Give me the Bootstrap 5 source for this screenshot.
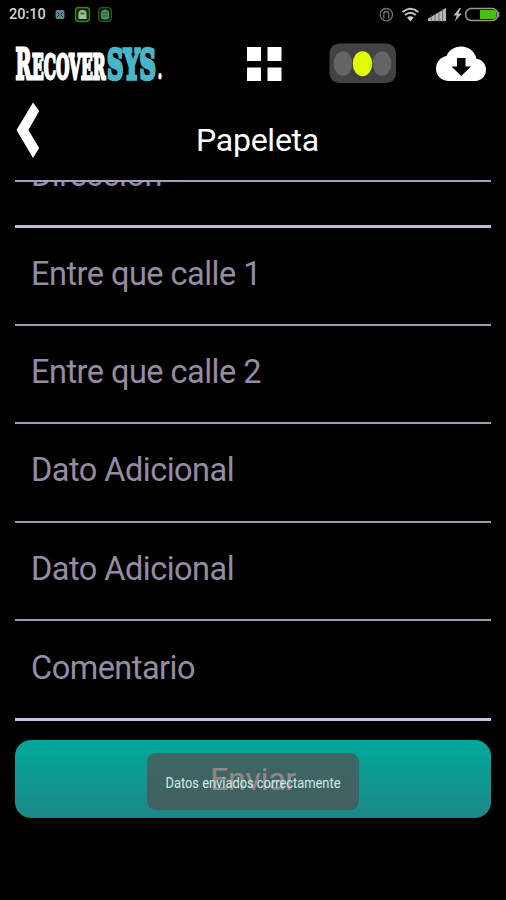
<!DOCTYPE html>
<html lang="es">
<head>
<meta charset="utf-8">
<meta name="viewport" content="width=device-width, initial-scale=1">
<title>RecoverSYS - Papeleta</title>
<link href="https://cdn.jsdelivr.net/npm/bootstrap@5.3.0/dist/css/bootstrap.min.css" rel="stylesheet">
<style>
body{background:#000;color:#fff;font-family:Roboto,sans-serif;height:900px;overflow:hidden}
svg{display:block;flex:none}
.status-bar{height:30px;padding:0 5px 0 9px}
.clock{font-size:14.5px;font-weight:500;line-height:30px;color:#d4d4d4;width:46px}
.app-bar{height:68px;padding:0 19px 0 14px}
.title-bar{height:82px;padding-left:16px}
.back-icon{margin-top:3px}
.page-title{font-size:32px;line-height:40px;font-weight:400;letter-spacing:-.25px;padding-top:22px;padding-left:156px;white-space:nowrap}
.form-area{margin:0 15px;height:541px;overflow:hidden;border-top:2px solid #ab9cbf}
.field-row{height:98.5px;padding:22px 0 0 16px;border-bottom:2px solid #a398b3}
.field-row.cut{height:46px;padding-top:0;border-bottom:3px solid #c7b4da}
.field-row.cut .field-label{margin-top:-31px}
.field-row.cut + .field-row{height:97.5px}
.field-row.strong{height:100px;border-bottom:3px solid #d0bce4;padding-top:23px}
.field-label{font-size:32.500px;line-height:48px;letter-spacing:-.52px;color:#958ba3;white-space:nowrap}
.send{margin:19px 15px 0;height:78px;border-radius:16px;background:linear-gradient(#02a99c,#1d8787);border:0}
.send-label{font-size:32px;line-height:78px;letter-spacing:-.3px;color:#fff}
.notice{left:132px;top:13px;width:212px;height:57px;border-radius:9px;background:rgba(90,73,74,.66)}
</style>
</head>
<body class="d-flex flex-column">
<div class="status-bar d-flex align-items-center justify-content-between">
  <div class="d-flex align-items-center">
    <span class="clock">20:10</span>
    <svg width="60" height="20" viewBox="55 5 60 20">
      <rect x="55.500" y="10" width="9" height="9" rx="2" fill="#668489"/><path d="M57 12l2.500 2.500L57 17M63 12l-2.500 2.500L63 17" stroke="#283c40" fill="none"/>
      <rect x="75.500" y="7.500" width="14" height="14" rx="3" fill="#10290b" stroke="#388019" stroke-width="1.300"/><path d="M78.500 19v-5q0-4 4-4t4 4v5z" fill="#9fbd97"/><path d="M80.500 12.500h4v2h-4z" fill="#42623b"/>
      <rect x="98.500" y="7.500" width="13" height="14" rx="3" fill="#102a14" stroke="#245e23"/><path d="M101 12q4-5 8 0v6q-4 3-8 0z" fill="#568c5b"/><path d="M102.500 13h5m-5 3h5" stroke="#204628"/>
    </svg>
  </div>
  <svg width="124" height="22" viewBox="378 4 124 22">
    <g fill="none" stroke="#737373" stroke-width="1.300"><circle cx="387.300" cy="14.700" r="6.200"/><path d="M384.800 18.500v-4.500a2.500 2.500 0 0 1 5 0v4.500"/></g>
    <g fill="none" stroke="#c6c6c6" stroke-width="2"><path d="M403.500 12q7.900-6.500 15.800 0M406 15q5.400-4.500 10.800 0"/></g><path d="M408 17.500q3.400-2.500 6.800 0l-3.400 4z" fill="#ccc"/>
    <path d="M429 21v-2.500L447 8v13z" fill="#b5b5b5"/><path d="M432.500 15v7M436 13v9M440 11v11M443.500 9v13" stroke="#555" stroke-width=".7"/>
    <path d="M460.500 8l-6 7.500h3.300l-2 6 7-8h-3.600l2.800-5.500z" fill="#bbb"/>
    <rect x="466.700" y="8.500" width="32" height="12" rx="5.500" fill="#000" stroke="#999" stroke-width="1.500"/><path d="M481 10h13q3.500 0 3.500 3v3q0 3-3.500 3h-13z" fill="#48c10b"/><path d="M499.700 12v5" stroke="#8a8a8a" stroke-width="1.500"/>
  </svg>
</div>

<header class="app-bar d-flex align-items-center">
  <svg width="232" height="68" viewBox="14 30 232 68" font-family="'DejaVu Serif',serif" font-weight="700" stroke-linejoin="miter">
    <text y="79" fill="#fff" stroke="#fff" stroke-width="2.800"><tspan x="15.500" font-size="42" textLength="16" lengthAdjust="spacingAndGlyphs">R</tspan><tspan x="32" font-size="34" textLength="73.500" lengthAdjust="spacingAndGlyphs">ECOVER</tspan><tspan x="107" font-size="41" textLength="49" lengthAdjust="spacingAndGlyphs" fill="#48b6c6" stroke="#48b6c6" stroke-width="3.600">SYS</tspan><tspan x="157.500" font-size="29" textLength="5" lengthAdjust="spacingAndGlyphs" stroke-width="1">.</tspan></text>
  </svg>
  <svg width="241" height="68" viewBox="246 30 241 68">
    <path d="M247 47h14v14h-14zM267.500 47h14v14h-14zM247 67.500h14v13.500h-14zM267.500 67.500h14v13.500h-14z" fill="#fff"/>
    <rect x="329.500" y="43.500" width="66.500" height="39.500" rx="9.500" fill="#424242"/>
    <g fill="#656565"><ellipse cx="343" cy="63.500" rx="9.300" ry="12.300"/><ellipse cx="382" cy="63.500" rx="9.300" ry="12.300"/></g>
    <ellipse cx="362.500" cy="63.700" rx="9.700" ry="12.500" fill="#dfff00"/>
    <path d="M449 81C441.500 81 436 76 436 68.800C436 62 441 56.800 446.500 56C449 50 454.500 46.500 461 46.500C469 46.500 475 51.500 476.500 59C482 59.500 486 64 486 69.800C486 76 481.500 81 475 81Z" fill="#fff"/>
    <path d="M457 58h8.500v8.500h5.500L461.200 76 451.500 66.500h5.500z" fill="#000"/>
  </svg>
</header>

<div class="title-bar d-flex align-items-start">
  <svg class="back-icon" width="24" height="60" viewBox="16 101 24 60"><path d="M33 102.500l6.200 8.500-10.800 19 10.800 18-6.200 10L16.500 130z" fill="#fff"/></svg>
  <h1 class="page-title mb-0">Papeleta</h1>
</div>

<main class="form-area">
  <div class="field-row cut overflow-hidden"><div class="field-label">Dirección</div></div>
  <div class="field-row"><div class="field-label">Entre que calle 1</div></div>
  <div class="field-row"><div class="field-label">Entre que calle 2</div></div>
  <div class="field-row"><div class="field-label">Dato Adicional</div></div>
  <div class="field-row"><div class="field-label">Dato Adicional</div></div>
  <div class="field-row strong"><div class="field-label">Comentario</div></div>
</main>

<div class="send position-relative text-center">
  <span class="send-label">Enviar</span>
  <div class="notice position-absolute">
    <svg width="212" height="57" font-family="Roboto,sans-serif"><text x="18.500" y="34.500" font-size="14" fill="#cdeee8" textLength="175" lengthAdjust="spacingAndGlyphs">Datos enviados correctamente</text></svg>
  </div>
</div>
<script src="https://cdn.jsdelivr.net/npm/bootstrap@5.3.0/dist/js/bootstrap.bundle.min.js"></script>
</body>
</html>
